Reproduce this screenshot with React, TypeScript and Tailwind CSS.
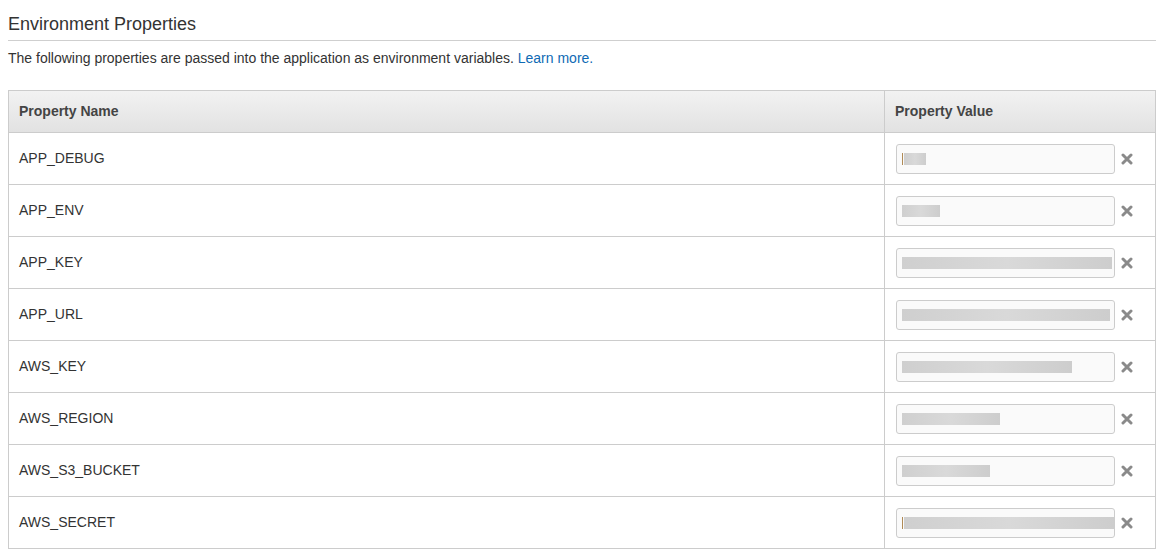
type Row = { name: string; blur: number[]; caret?: boolean };

// values are redacted in the screenshot, so each row just gets grey blocks
const rows: Row[] = [
  { name: 'APP_DEBUG', blur: [22], caret: true },
  { name: 'APP_ENV', blur: [38] },
  { name: 'APP_KEY', blur: [210] },
  { name: 'APP_URL', blur: [208] },
  { name: 'AWS_KEY', blur: [170] },
  { name: 'AWS_REGION', blur: [98] },
  { name: 'AWS_S3_BUCKET', blur: [88] },
  { name: 'AWS_SECRET', blur: [210], caret: true },
];

const RemoveIcon = () => (
  <svg width="12" height="12" viewBox="0 0 12 12" className="shrink-0">
    <path d="M2 2 L10 10 M10 2 L2 10" stroke="#8a8a8a" strokeWidth="3" strokeLinecap="round" />
  </svg>
);

const App = () => {
  return (
    <div className="min-h-screen bg-white px-2 text-[#333] font-['Liberation_Sans',Arial,sans-serif]">
      {/* Header */}
      <div className="pt-[14px] pb-[6px] border-b border-[#cfcfcf]">
        <h2 className="text-[18px] leading-[20px] text-[#333]">Environment Properties</h2>
      </div>
      <p className="mt-[9px] text-[14px] leading-[16px] text-[#333]">
        The following properties are passed into the application as environment variables.{' '}
        <a href="#" className="text-[#0f6ab4]">Learn more.</a>
      </p>

      {/* Table */}
      <div className="mt-[24px] border-x border-t border-[#cccccc]">
        <div className="flex h-[42px] items-center bg-gradient-to-b from-[#f2f2f2] to-[#e2e2e2] border-b border-[#cccccc] text-[14px] font-bold text-[#444]">
          <div className="w-[876px] pl-[10px] h-full flex items-center border-r border-[#cccccc]">Property Name</div>
          <div className="flex-1 pl-[10px]">Property Value</div>
        </div>
        {rows.map((row) => (
          <div key={row.name} className="flex h-[52px] text-[14px] border-b border-[#cccccc]">
            <div className="w-[876px] pl-[10px] flex items-center border-r border-[#cccccc]">{row.name}</div>
            <div className="flex-1 pl-[11px] flex items-center gap-[6px]">
              <div className="w-[219px] h-[30px] rounded-[3px] border border-[#cccccc] bg-[#fafafa] flex items-center pl-[5px] overflow-hidden">
                {row.caret && <span className="w-px h-[12px] bg-[#b08a55] mr-px" />}
                {row.blur.map((w, j) => (
                  <span
                    key={j}
                    className="h-[12px] bg-gradient-to-r from-[#cfcfcf] via-[#d9d9d9] to-[#cdcdcd] blur-[0.5px]"
                    style={{ width: w }}
                  />
                ))}
              </div>
              <RemoveIcon />
            </div>
          </div>
        ))}
      </div>
    </div>
  );
};

export default App;
